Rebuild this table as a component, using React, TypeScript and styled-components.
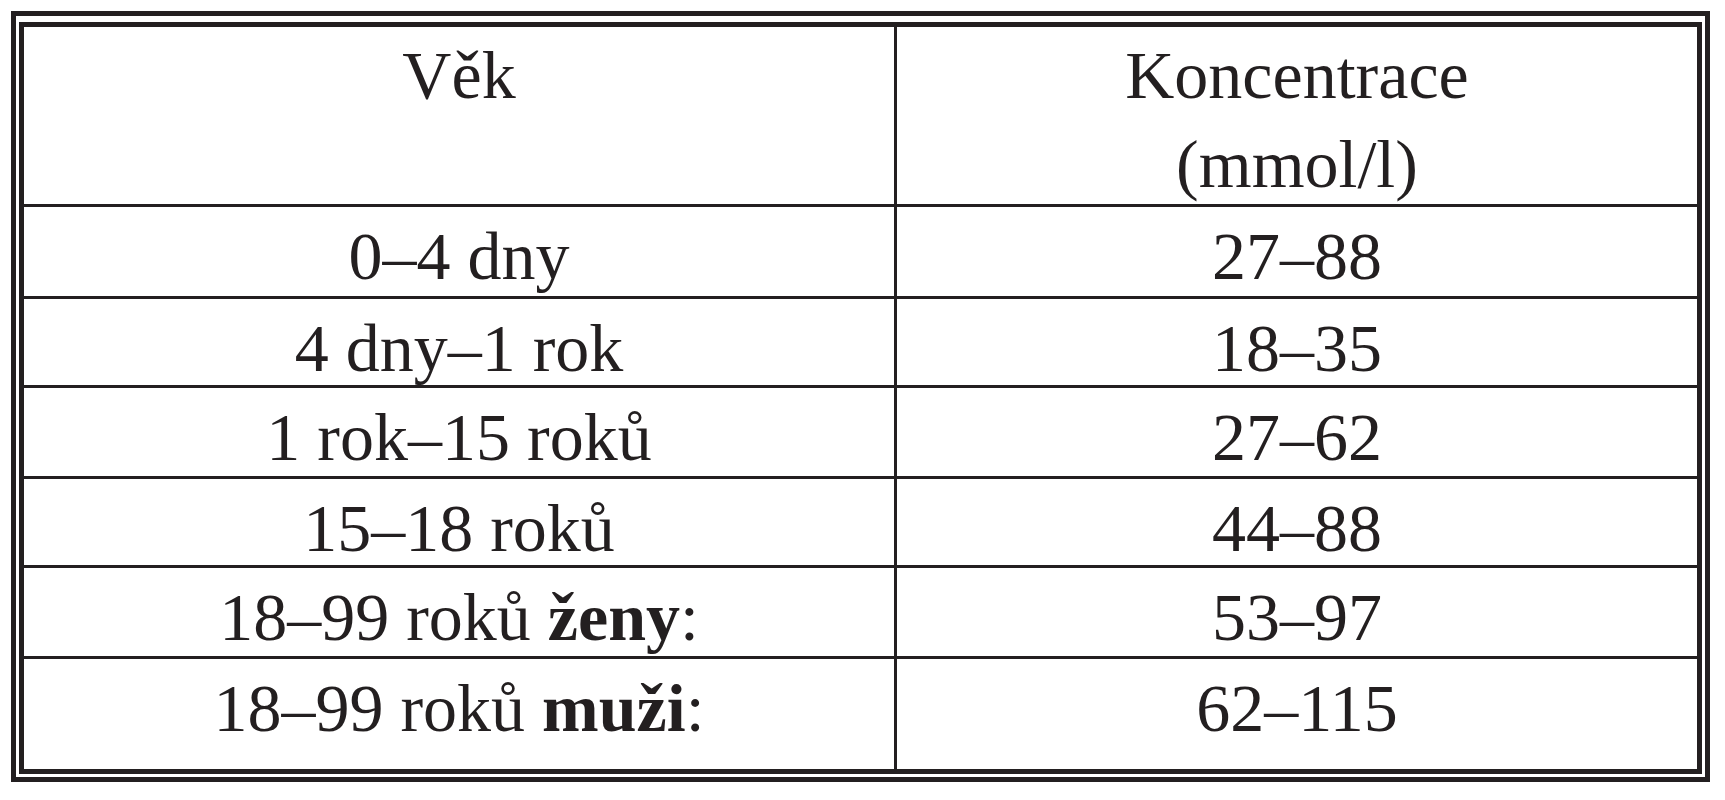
import React from "react";
import styled, { createGlobalStyle } from "styled-components";

const GlobalStyle = createGlobalStyle`
  html, body {
    margin: 0;
    padding: 0;
    background: #ffffff;
  }
`;

const INK = "#231f20";

const Page = styled.div`
  padding: 11px;
  background: #ffffff;
`;

const OuterFrame = styled.div`
  box-sizing: border-box;
  width: 1699px;
  height: 771px;
  border: 5px solid ${INK};
  padding: 6px 3px 3px 3px;
`;

const InnerFrame = styled.div`
  box-sizing: border-box;
  height: 100%;
  border: 5px solid ${INK};
  display: flex;
  flex-direction: column;
  font-family: "Liberation Serif", "Times New Roman", serif;
  font-size: 68px;
  color: ${INK};
`;

const Row = styled.div<{ $h?: number; $last?: boolean }>`
  display: grid;
  grid-template-columns: 873px 1fr;
  flex: ${(p) => (p.$h ? "0 0 auto" : "1 1 auto")};
  height: ${(p) => (p.$h ? `${p.$h}px` : "auto")};
  border-bottom: ${(p) => (p.$last ? "none" : `3px solid ${INK}`)};
`;

const Cell = styled.div<{ $head?: boolean; $left?: boolean }>`
  box-sizing: border-box;
  text-align: center;
  line-height: ${(p) => (p.$head ? "89px" : "80px")};
  padding-top: ${(p) => (p.$head ? "4px" : "9px")};
  border-right: ${(p) => (p.$left ? `3px solid ${INK}` : "none")};
  white-space: nowrap;
`;

const Strong = styled.b`
  font-weight: 700;
`;

type Item = { age: React.ReactNode; value: string; h?: number };

const rows: Item[] = [
  { age: "0–4 dny", value: "27–88", h: 89 },
  { age: "4 dny–1 rok", value: "18–35", h: 86 },
  { age: "1 rok–15 roků", value: "27–62", h: 88 },
  { age: "15–18 roků", value: "44–88", h: 86 },
  {
    age: (
      <>
        18–99 roků <Strong>ženy</Strong>:
      </>
    ),
    value: "53–97",
    h: 88,
  },
  {
    age: (
      <>
        18–99 roků <Strong>muži</Strong>:
      </>
    ),
    value: "62–115",
  },
];

export default function App() {
  return (
    <>
      <GlobalStyle />
      <Page>
        <OuterFrame>
          <InnerFrame>
            <Row $h={177}>
              <Cell $head $left>
                Věk
              </Cell>
              <Cell $head>
                Koncentrace
                <br />
                (mmol/l)
              </Cell>
            </Row>
            {rows.map((r, i) => (
              <Row key={i} $h={r.h} $last={i === rows.length - 1}>
                <Cell $left>{r.age}</Cell>
                <Cell>{r.value}</Cell>
              </Row>
            ))}
          </InnerFrame>
        </OuterFrame>
      </Page>
    </>
  );
}
